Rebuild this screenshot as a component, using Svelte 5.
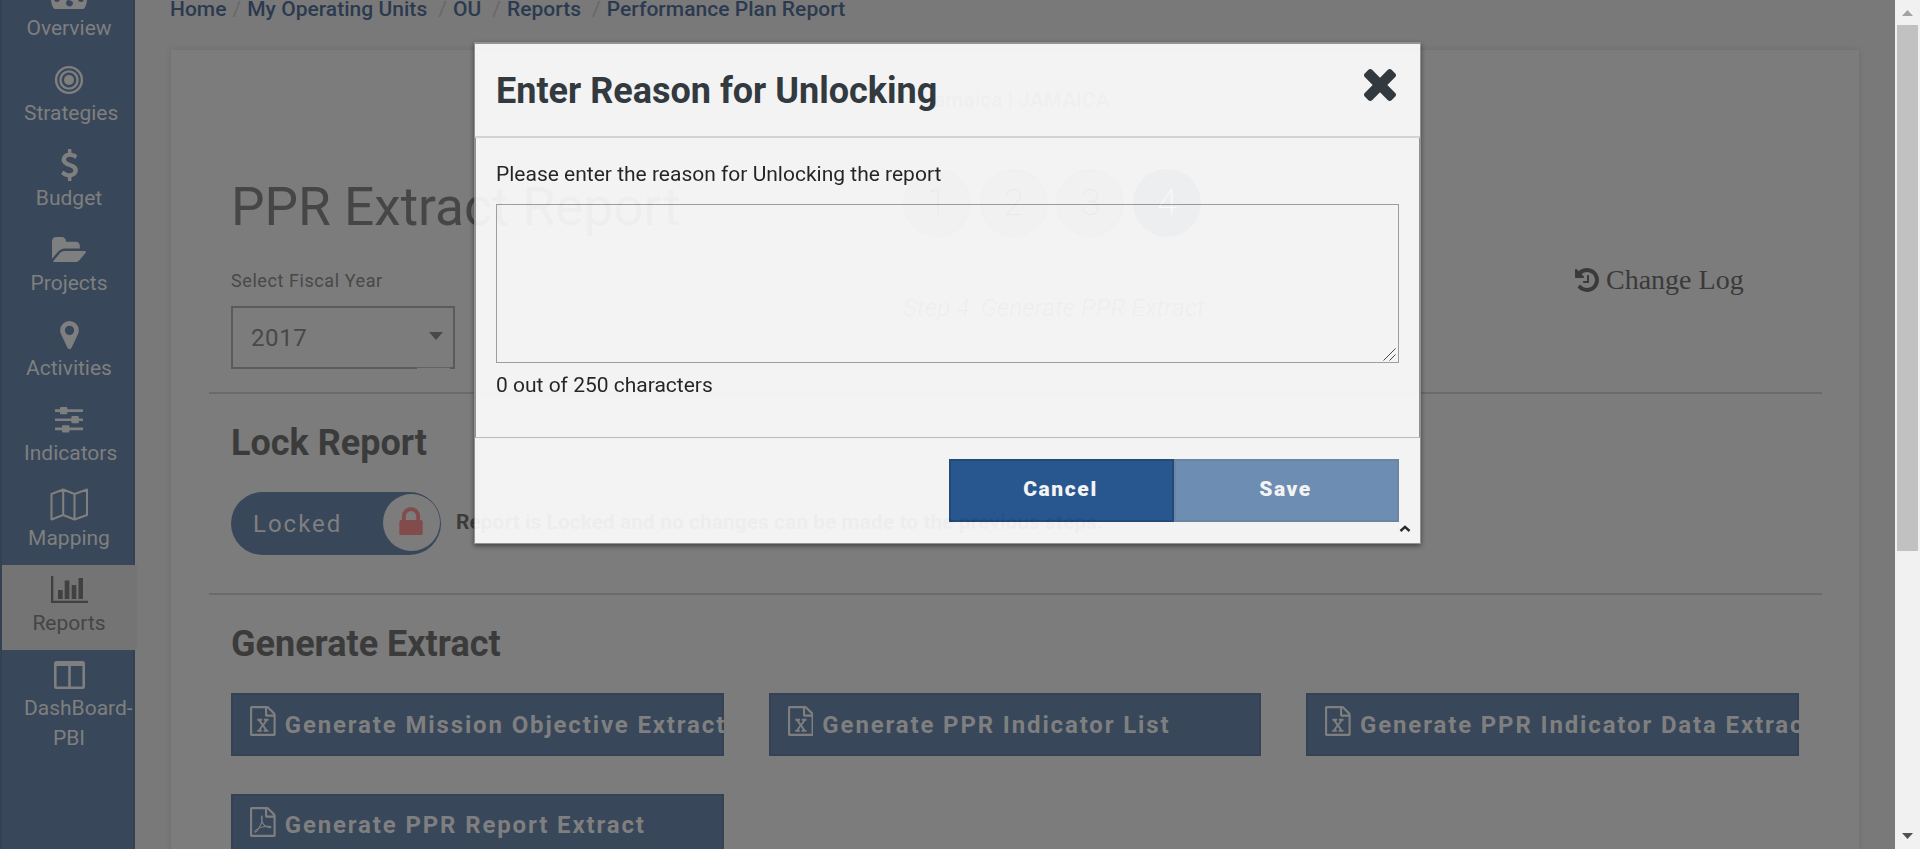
<script>
  const nav = [
    { label: 'Overview', icon: 'gauge' },
    { label: 'Strategies', icon: 'target' },
    { label: 'Budget', icon: 'dollar' },
    { label: 'Projects', icon: 'folder' },
    { label: 'Activities', icon: 'marker' },
    { label: 'Indicators', icon: 'sliders' },
    { label: 'Mapping', icon: 'map' },
    { label: 'Reports', icon: 'chart', active: true },
    { label: 'DashBoard-PBI', icon: 'columns' }
  ];
  const crumbs = ['Home', 'My Operating Units', 'OU', 'Reports', 'Performance Plan Report'];
  const extracts = [
    { label: 'Generate Mission Objective Extract', kind: 'excel' },
    { label: 'Generate PPR Indicator List', kind: 'excel' },
    { label: 'Generate PPR Indicator Data Extract', kind: 'excel' },
    { label: 'Generate PPR Report Extract', kind: 'pdf' }
  ];
  const page = 'M1596 380q28 28 48 76t20 88v1152q0 40-28 68t-68 28h-1344q-40 0-68-28t-28-68v-1600q0-40 28-68t68-28h896q40 0 88 20t76 48zm-444-244v376h376q-10-29-22-41l-313-313q-12-12-41-22zm384 1528v-1024h-416q-40 0-68-28t-28-68v-416h-768v1536h1280z';
  const marks = {
    excel: 'm-979-234v106h281v-106h-75l103-161q5-7 10-16.5t7.5-13.5 3.5-4h2q1 4 5 10 2 4 4.5 7.5t6 8 6.5 8.5l107 161h-76v106h291v-106h-68l-192-273 195-282h67v-107h-279v107h74l-103 159q-4 7-10 16.5t-9 13.5l-2 3h-2q-1-4-5-10-6-11-17-23l-106-159h76v-107h-290v107h68l189 272-194 283h-68z',
    pdf: 'm-514-593q33 26 84 56 59-7 117-7 147 0 177 49 16 22 2 52 0 1-1 2l-2 2v1q-6 38-71 38-48 0-115-20t-130-53q-221 24-392 83-153 262-242 262-15 0-28-7l-24-12q-1-1-6-5-10-10-6-36 9-40 56-91.5t132-96.5q14-9 23 6 2 2 2 4 52-85 107-197 68-136 104-262-24-82-30.5-159.5t6.5-127.5q11-40 42-40h22q23 0 35 15 18 21 9 68-2 6-4 8 1 3 1 8v30q-2 123-14 192 55 164 146 238zm-576 411q52-24 137-158-51 40-87.5 84t-49.5 74zm398-920q-15 42-2 132 1-7 7-44 0-3 7-43 1-4 4-8-1-1-1-2-1-2-1-3-1-22-13-36 0 1-1 2v2zm-124 661q135-54 284-81-2-1-13-9.5t-16-13.5q-76-67-127-176-27 86-83 197-30 56-45 83zm646-16q-24-24-140-24 76 28 124 28 14 0 18-1 0-1-2-3z'
  };
  let reason = $state('');
</script>

<div class="screen">
  <nav class="side">
    {#each nav as item}
      <div class="item" class:active={item.active}>
        <div class="ico">
          {#if item.icon === 'gauge'}
            <svg width="36" height="28" viewBox="0 32 576 448"><path fill-rule="evenodd" d="M288 32C129 32 0 161 0 320c0 53 14 102 39 145 6 9 16 15 27 15h444c11 0 21-6 27-15 25-43 39-92 39-145 0-159-129-288-288-288zM144 320a32 32 0 1 1-96 0 32 32 0 1 1 96 0zm384 0a32 32 0 1 1-96 0 32 32 0 1 1 96 0zM352 384a56 56 0 1 1-86-48l50-170 30 9-50 170q56 9 56 39z" /></svg>
          {:else if item.icon === 'target'}
            <svg width="30" height="30" viewBox="-15 -15 30 30"><g fill="none" stroke="currentColor" stroke-width="2.4"><circle r="12.9" /><circle r="8.6" /></g><circle r="5" /></svg>
          {:else if item.icon === 'dollar'}
            <svg width="17" height="32" viewBox="429 0 933 1792"><path d="M1362 1185q0 153-99.5 263.5t-258.5 136.5v175q0 14-9 23t-23 9h-135q-13 0-22.5-9.5t-9.5-22.5v-175q-66-9-127.5-31t-101.5-44.5-74-48-46.5-37.5-17.5-18q-17-21-2-41l103-135q7-10 23-12 15-2 24 9l2 2q113 99 243 125 37 8 74 8 81 0 142.5-43t61.5-122q0-28-15-53t-33.5-42-58.5-37.5-66-32-80-32.5q-39-16-61.5-25t-61.5-26.5-62.5-31-56.5-35.5-53.5-42.5-43.5-49-35.5-58-21-66.5-8.5-78q0-138 98-242t255-134v-180q0-13 9.5-22.5t22.5-9.5h135q14 0 23 9t9 23v176q57 6 110.5 23t87 33.5 63.5 37.5 39 29 15 14q17 18 5 38l-81 146q-8 15-23 16-14 3-27-7-3-3-14.5-12t-39-26.5-58.5-32-74.5-26-85.5-11.5q-95 0-155 43t-60 111q0 26 8.5 48t29.5 41.5 39.5 33 56 31 60.5 27 70 27.5q53 20 81 31.5t76 35 75.5 42.5 62 50 53 63.5 31.5 76.5 13 94z" /></svg>
          {:else if item.icon === 'folder'}
            <svg width="34" height="25.5" viewBox="-64 128 1879 1408"><path d="M1815 952q0 31-31 66l-336 396q-43 51-120.5 86.5t-143.5 35.5h-1088q-34 0-60.5-13t-26.5-43q0-31 31-66l336-396q43-51 120.5-86.5t143.5-35.5h1088q34 0 60.5 13t26.5 43zm-343-344v160h-832q-94 0-197 47.5t-164 119.5l-337 396-5 6q0-4-.5-12.5t-.5-12.5v-960q0-92 66-158t158-66h320q92 0 158 66t66 158v32h544q92 0 158 66t66 158z" /></svg>
          {:else if item.icon === 'marker'}
            <svg width="19" height="28" viewBox="384 128 1024 1536"><path d="M1152 640q0-106-75-181t-181-75-181 75-75 181 75 181 181 75 181-75 75-181zm256 0q0 109-33 179l-364 774q-16 33-47.5 52t-67.5 19-67.5-19-46.5-52l-365-774q-33-70-33-179 0-212 150-362t362-150 362 150 150 362z" /></svg>
          {:else if item.icon === 'sliders'}
            <svg width="28" height="26" viewBox="0 0 28 26"><path d="M0 2.3h28v2.6H0zM0 11.4h28V14H0zM0 20.6h28v2.6H0z" /><rect x="5" y="0" width="7.4" height="7.2" rx="1" /><rect x="16.4" y="9.1" width="7.4" height="7.2" rx="1" /><rect x="7" y="18.3" width="7.4" height="7.2" rx="1" /></svg>
          {:else if item.icon === 'map'}
            <svg width="38" height="33" viewBox="0 0 38 33"><path fill="none" stroke="currentColor" stroke-width="2.1" stroke-linejoin="round" d="M1.5 6 13.2 1.6 24.5 6 37 1.6V27L24.5 31.4 13.2 27 1.5 31.4zM13.2 1.6V27M24.5 6v25.4" /></svg>
          {:else if item.icon === 'chart'}
            <svg width="37" height="27" viewBox="0 0 37 27"><path d="M0 0h2.3v24.8H37V27H0zM7 14h4.7v9H7zM13.7 4.5h4.7V23h-4.7zM20.7 9h4.6v14h-4.6zM27.5 2H32v21h-4.5z" /></svg>
          {:else}
            <svg width="31" height="28" viewBox="0 0 31 28"><path fill-rule="evenodd" d="M2.5 0h26A2.5 2.5 0 0 1 31 2.5v23a2.5 2.5 0 0 1-2.5 2.5h-26A2.5 2.5 0 0 1 0 25.5v-23A2.5 2.5 0 0 1 2.5 0zM2.6 5v20.4h11.6V5zm14.2 0v20.4h11.6V5z" /></svg>
          {/if}
        </div>
        <div class="name">{item.label}</div>
      </div>
    {/each}
  </nav>

  <main>
    <div class="crumbs">
      {#each crumbs as crumb, i}
        {#if i > 0}<i>/</i>{/if}<b>{crumb}</b>
      {/each}
    </div>

    <section class="card">
      <div class="unit">Jamaica | JAMAICA</div>
      <div class="top">
        <div class="col">
          <h1>PPR Extract Report</h1>
          <div class="label">Select Fiscal Year</div>
          <div class="select"><span>2017</span><svg width="14" height="8" viewBox="0 0 14 8"><path d="M0 0h14L7 8z" /></svg></div>
        </div>
        <div class="col">
          <div class="steps"><span>1</span><span>2</span><span>3</span><span class="on">4</span></div>
          <div class="steptext">Step 4: Generate PPR Extract</div>
        </div>
        <div class="log">
          <svg width="24" height="24" viewBox="128 128 1536 1536"><path d="M1664 896q0 156-61 298t-164 245-245 164-298 61q-172 0-327-72.5t-264-204.5q-7-10-6.5-22.5t8.5-20.5l137-138q10-9 25-9 16 2 23 12 73 95 179 147t225 52q104 0 198.5-40.5t163.5-109.5 109.5-163.5 40.5-198.5-40.5-198.5-109.5-163.5-163.5-109.5-198.5-40.5q-98 0-188 35.5t-160 101.5l137 138q31 30 14 69-17 40-59 40h-448q-26 0-45-19t-19-45v-448q0-42 40-59 39-17 69 14l130 129q107-101 244.5-156.5t284.5-55.5q156 0 298 61t245 164 164 245 61 298zm-640-288v448q0 14-9 23t-23 9h-320q-14 0-23-9t-9-23v-64q0-14 9-23t23-9h224v-352q0-14 9-23t23-9h64q14 0 23 9t9 23z" /></svg>
          <span>Change Log</span>
        </div>
      </div>

      <hr />
      <h2>Lock Report</h2>
      <div class="lockrow">
        <div class="toggle">
          <span>Locked</span>
          <div class="knobby"><svg width="24" height="28.5" viewBox="320 128 1152 1408"><path d="M640 768h512v-192q0-106-75-181t-181-75-181 75-75 181v192zm832 96v576q0 40-28 68t-68 28h-960q-40 0-68-28t-28-68v-576q0-40 28-68t68-28h32v-192q0-184 132-316t316-132 316 132 132 316v192h32q40 0 68 28t28 68z" /></svg></div>
        </div>
        <strong>Report is Locked and no changes can be made to the previous steps.</strong>
      </div>
      <hr />
      <h2>Generate Extract</h2>
      <div class="extracts">
        {#each extracts as e}
          <button class="extract">
            <svg width="25.7" height="30" viewBox="128 0 1536 1792"><path d={page + marks[e.kind]} /></svg>
            <span class={e.kind}>{e.label}</span>
          </button>
        {/each}
      </div>
    </section>
  </main>

  <div class="scroll">
    <svg width="11" height="6" viewBox="0 0 11 6"><path fill="#a3a3a3" d="M0 6h11L5.5 0z" /></svg>
    <div class="thumb"></div>
    <svg class="down" width="11" height="6" viewBox="0 0 11 6"><path fill="#505050" d="M0 0h11L5.5 6z" /></svg>
  </div>

  <div class="modal">
    <header>
      <h3>Enter Reason for Unlocking</h3>
      <svg width="32" height="32" viewBox="302 366 1188 1188"><path d="M1490 1322q0 40-28 68l-136 136q-28 28-68 28t-68-28l-294-294-294 294q-28 28-68 28t-68-28l-136-136q-28-28-28-68t28-68l294-294-294-294q-28-28-28-68t28-68l136-136q28-28 68-28t68 28l294 294 294-294q28-28 68-28t68 28l136 136q28 28 28 68t-28 68l-294 294 294 294q28 28 28 68z" /></svg>
    </header>
    <div class="body">
      <label for="reason">Please enter the reason for Unlocking the report</label>
      <div class="field">
        <textarea id="reason" bind:value={reason}></textarea>
        <svg class="grip" width="13" height="13" viewBox="0 0 13 13"><path d="M.5 12.5 12.5.5M6.5 12.5l6-6" fill="none" stroke="#444" stroke-width="1" /></svg>
      </div>
      <div class="count">{reason.length} out of 250 characters</div>
    </div>
    <footer>
      <button class="btn">Cancel</button><button class="btn off">Save</button>
      <svg class="up" width="12" height="7" viewBox="0 0 12 7"><path d="M1.5 6 6 1.8 10.5 6" fill="none" stroke="#222" stroke-width="2.4" /></svg>
    </footer>
  </div>
</div>

<style>
  :global(body) { margin: 0; overflow: hidden; }
  * { box-sizing: border-box; }
  .screen { position: relative; display: flex; width: 1920px; height: 849px; overflow: hidden; background: #797979; font: 21px/30px Roboto, sans-serif; letter-spacing: 0; color: #3b3b3b; }
  svg { display: block; flex: none; fill: currentColor; }

  .side { width: 135px; flex: none; background: #39475a; border: solid #344153; border-width: 0 2px; color: #7f7f7f; height: 879px; margin-top: -30px; }
  .item { height: 85px; padding: 7px 22px 0; }
  .item.active { width: 135px; background: #747474; color: #414141; }
  .ico { display: flex; height: 35px; width: 90px; align-items: center; justify-content: center; }
  .name { width: 90px; margin-top: 1px; text-align: center; }
  .item.active .name { color: #454545; }

  main { flex: 1; min-width: 0; padding: 0 36px; }
  .crumbs { display: flex; height: 50px; margin: -6px 0 0 -1px; font-weight: 500; letter-spacing: .03px; color: #2c3a50; white-space: nowrap; }
  .crumbs b { font-weight: 500; }
  .crumbs i { font-style: normal; font-weight: 400; color: #686868; padding: 0 6px 0 11px; }
  .crumbs i:nth-of-type(1) { padding-left: 6px; }
  .card { height: 830px; margin-top: 6px; padding: 35px 37px 0 38px; background: #7c7c7c; box-shadow: 0 0 6px rgba(0, 0, 0, .1); }
  .unit { text-align: center; font-weight: 500; color: #505050; height: 84px; padding-left: 1px; }
  .top { display: grid; grid-template-columns: 672px 672px 1fr; padding-left: 22px; height: 223px; }
  h1 { margin: 6px 0 0; font-weight: 400; font-size: 53.2px; line-height: 64px; letter-spacing: 0; color: #464646; }
  .label { margin-top: 30px; font-size: 18px; line-height: 24px; letter-spacing: .58px; color: #484848; }
  .select { position: relative; margin-top: 13px; display: flex; align-items: center; justify-content: space-between; width: 224px; height: 63px; border: 2px solid #5a5a5a; padding: 0 10px 0 18px; font-size: 24px; letter-spacing: .6px; color: #484848; }
  .select::after { content: ''; position: absolute; right: 3px; bottom: -2px; width: 33px; height: 2px; background: linear-gradient(#646464 50%, #7c7c7c 50%); }
  .select svg { margin-top: -4px; }
  .steps { display: flex; gap: 8.7px; }
  .steps span { width: 68px; height: 68px; border-radius: 50%; border: 2px solid #805252; background: #676767; font-size: 37px; line-height: 64px; font-weight: 100; text-align: center; color: #111; letter-spacing: 0; }
  .steps .on { background: #39475a; border-color: #434556; color: #c8c8c8; }
  .steptext { margin-top: 56px; font-size: 24px; font-style: italic; font-weight: 300; letter-spacing: .27px; color: #3c3c3c; }
  .log { display: flex; gap: 7px; height: 32px; margin-top: 95px; align-items: center; font-family: "Liberation Serif", serif; font-size: 28px; letter-spacing: 0; color: #3a3a3a; white-space: nowrap; }

  hr { margin: 0; border: 0; height: 2px; background: #6b6b6b; }
  h2 { margin: 27px 0 27px 22px; font-size: 36px; line-height: 44px; font-weight: 700; letter-spacing: 0; color: #3b3b3b; }
  .lockrow { display: flex; align-items: center; height: 63px; margin: 0 0 38px 22px; gap: 15px; white-space: nowrap; }
  .toggle { display: flex; align-items: center; justify-content: space-between; width: 210px; height: 63px; border-radius: 32px; background: #39475a; color: #7f7f7f; font-size: 24px; letter-spacing: 2px; padding: 0 1px 0 22px; }
  .knobby { display: flex; align-items: center; justify-content: center; width: 57px; height: 57px; margin-top: -3px; padding: 0 2px 2px 0; border-radius: 50%; background: #7c7c7c; color: #824c4d; }
  .lockrow strong { font-weight: 700; margin-top: -4px; }

  .extracts { display: grid; grid-template-columns: repeat(3, 1fr); gap: 38px 45px; margin: 0 22px; width: 1568px; }
  .extract { display: flex; align-items: center; gap: 9px; height: 63px; border: 0; box-shadow: inset 0 0 0 2px #354255; padding: 0 0 0 19px; background: #39475a; color: #7f7f7f; font: 700 24px/30px Roboto, sans-serif; letter-spacing: 1.86px; white-space: nowrap; overflow: hidden; min-width: 0; border-radius: 0; }
  .extract svg { margin-bottom: 7px; }
  .extract .pdf { margin-bottom: 2px; }

  .scroll { width: 25px; height: 849px; background: #f1f1f1; display: flex; flex-direction: column; align-items: center; padding: 10px 0; }
  .thumb { width: 21px; height: 526px; margin-top: 9px; background: #c1c1c1; }
  .down { margin-top: auto; }

  .modal { position: absolute; left: 474px; top: 42px; width: 947px; height: 502px; background: #fff; border: 2px solid #959595; opacity: .91; box-shadow: 0 2px 5px rgba(0, 0, 0, .5); color: #1d1d1d; }
  header { display: flex; justify-content: space-between; height: 94px; margin: 0 -1px; padding: 24px 24px 0 21px; background: #fff; border-bottom: 2px solid #dcdcdc; color: #2b333a; }
  header svg { margin-top: 1px; }
  h3 { margin: 0; font-size: 36px; line-height: 46px; font-weight: 700; letter-spacing: 0; }
  .body { height: 299px; padding: 21px 20px 0; }
  label { display: block; }
  .field { position: relative; margin-top: 15px; }
  textarea { display: block; width: 903px; height: 159px; border: 1px solid #a2a2a2; border-radius: 0; background: transparent; outline: 0; padding: 8px; font: inherit; resize: none; }
  .grip { position: absolute; right: 3px; bottom: 2px; }
  .count { margin-top: 7px; }
  footer { position: relative; display: flex; justify-content: flex-end; height: 106px; margin: 0 -1px; padding: 21px 21px 0; background: #fff; border-top: 1px solid #c0c0c0; }
  .btn { width: 225px; height: 63px; padding: 0 2px 4px 0; border: 2px solid #1c4778; border-radius: 0; background: #205493; color: #fff; font: 900 21px/30px Roboto, sans-serif; letter-spacing: 1.6px; }
  .off { opacity: .65; }
  .up { position: absolute; right: 9px; bottom: 11px; }
</style>
